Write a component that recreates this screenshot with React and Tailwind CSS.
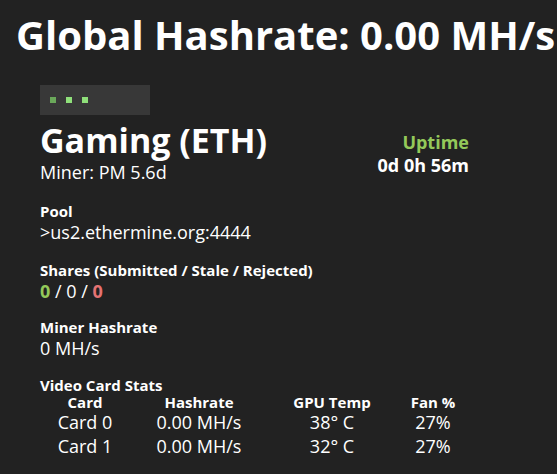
export default function App() {
  const cards = [
    { name: "Card 0", hash: "0.00 MH/s", temp: "38° C", fan: "27%" },
    { name: "Card 1", hash: "0.00 MH/s", temp: "32° C", fan: "27%" },
  ];
  return (
    <div className="w-[557px] h-[474px] overflow-hidden bg-[#222222] text-white" style={{ fontFamily: '"Open Sans", sans-serif' }}>
      <div className="pl-4 pt-[10px] text-[40px] font-bold leading-[50px] whitespace-nowrap">Global Hashrate: 0.00 MH/s</div>
      <div className="ml-10 mt-[25px] w-[110px] h-[30px] bg-[#383838] flex items-center gap-[10px] pl-[10px]">
        <div className="w-[6px] h-[6px] bg-[#6aa85a]"></div>
        <div className="w-[6px] h-[6px] bg-[#8fe07a]"></div>
        <div className="w-[6px] h-[6px] bg-[#8fe07a]"></div>
      </div>
      <div className="ml-10 flex w-[429px] justify-between">
        <div>
          <div className="mt-[5px] text-[34px] font-bold leading-[40px]">Gaming (ETH)</div>
          <div className="mt-[1px] text-[18px] leading-[22px]">Miner: PM 5.6d</div>
        </div>
        <div className="mt-[15px] text-right font-bold text-[18px]">
          <div className="leading-[24px] text-[#94c95a]">Uptime</div>
          <div className="leading-[22px]">0d 0h 56m</div>
        </div>
      </div>
      <div className="ml-10 mt-[18px]">
        <div className="text-[15px] font-bold leading-[20px]">Pool</div>
        <div className="text-[18px] leading-[22px]">&gt;us2.ethermine.org:4444</div>
        <div className="mt-[17px] text-[15px] font-bold leading-[20px]">Shares (Submitted / Stale / Rejected)</div>
        <div className="text-[18px] leading-[22px]">
          <span className="font-bold text-[#94c95a]">0</span> / 0 / <span className="font-bold text-[#e57373]">0</span>
        </div>
        <div className="mt-[15px] text-[15px] font-bold leading-[20px]">Miner Hashrate</div>
        <div className="text-[18px] leading-[22px]">0 MH/s</div>
        <div className="mt-[18px] text-[15px] font-bold leading-[17px]">Video Card Stats</div>
        <div className="grid grid-cols-[90px_138px_128px_74px] text-center">
          <div className="text-[15px] font-bold leading-[16px]">Card</div>
          <div className="text-[15px] font-bold leading-[16px]">Hashrate</div>
          <div className="text-[15px] font-bold leading-[16px]">GPU Temp</div>
          <div className="text-[15px] font-bold leading-[16px]">Fan %</div>
          {cards.map((c) => (
            <div key={c.name} className="contents">
              <div className="text-[18px] leading-[24px]">{c.name}</div>
              <div className="text-[18px] leading-[24px]">{c.hash}</div>
              <div className="text-[18px] leading-[24px]">{c.temp}</div>
              <div className="text-[18px] leading-[24px]">{c.fan}</div>
            </div>
          ))}
        </div>
      </div>
    </div>
  );
}
